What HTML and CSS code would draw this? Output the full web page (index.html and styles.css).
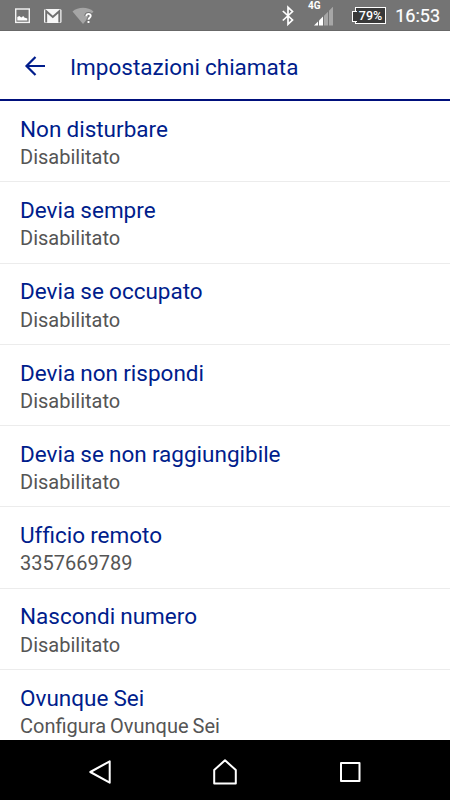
FILE: index.html
```html
<!DOCTYPE html>
<html lang="it">
<head>
<meta charset="utf-8">
<title>Impostazioni chiamata</title>
<link rel="stylesheet" href="styles.css">
</head>
<body>
<div class="screen">
  <div class="status">
    <svg class="status-icons" width="110" height="31" viewBox="0 0 110 31">
      <rect x="15.7" y="9" width="13.6" height="13.4" fill="none" stroke="#f4f4f4" stroke-width="1.4"/>
      <path d="M17.3 20.5v-3.5l2-1 2 1.500 2-1.500 1 1.500 3 1v2z" fill="#fff"/>
      <rect x="44" y="9" width="17.500" height="14" rx="1.500" fill="#f7f7f7"/>
      <path d="M46.200 22.500V11.200L52.800 17l6.500-5.800v11.300" fill="none" stroke="#707070" stroke-width="1.900"/>
      <path d="M72.500 11.500C78 6.500 88 6.500 93.500 11.500L83 24z" fill="#a5a5a5"/>
      <path d="M86.300 16.200c.2-3.200 4.600-2.900 4.400-.2-.2 1.800-2.200 1.600-2.200 4M88.500 21v2" fill="none" stroke="#747474" stroke-width="4"/>
      <path d="M86.300 16.200c.2-3.200 4.600-2.900 4.400-.2-.2 1.800-2.200 1.600-2.200 3.700M88.500 21v1.900" fill="none" stroke="#fff" stroke-width="1.900"/>
    </svg>
    <div class="status-right">
      <svg width="14" height="31" viewBox="281 0 14 31">
        <path d="M282.800 11L292.500 20 288 24.200V7.300L292.500 11.500 282.800 20.500" fill="none" stroke="#fff" stroke-width="1.700"/>
      </svg>
      <div class="signal">
        <span class="network">4G</span>
        <svg width="20" height="19" viewBox="314 7 20 19">
          <path d="M314 25.500l4-4v4z" fill="#fff"/>
          <path d="M319 20.500l4-4v9h-4z" fill="#fff"/>
          <path d="M324 15.700l4-4v13.800h-4zM329 10.700l4-4v18.800h-4z" fill="#a6a6a6"/>
        </svg>
      </div>
      <div class="battery">79%</div>
      <div class="clock">16:53</div>
    </div>
  </div>
  <header class="header">
    <svg width="22" height="22" viewBox="0 0 22 22">
      <path d="M21 11H2.500M11.500 2L2.500 11l9 9" fill="none" stroke="#001d8c" stroke-width="2.200"/>
    </svg>
    <h1>Impostazioni chiamata</h1>
  </header>
  <main class="list">
    <section class="row"><h2>Non disturbare</h2><p>Disabilitato</p></section>
    <section class="row"><h2>Devia sempre</h2><p>Disabilitato</p></section>
    <section class="row"><h2>Devia se occupato</h2><p>Disabilitato</p></section>
    <section class="row"><h2>Devia non rispondi</h2><p>Disabilitato</p></section>
    <section class="row"><h2>Devia se non raggiungibile</h2><p>Disabilitato</p></section>
    <section class="row"><h2>Uf&zwnj;ficio remoto</h2><p>3357669789</p></section>
    <section class="row"><h2>Nascondi numero</h2><p>Disabilitato</p></section>
    <section class="row"><h2>Ovunque Sei</h2><p>Configura Ovunque Sei</p></section>
  </main>
  <nav class="navbar">
    <svg width="26" height="28" viewBox="0 0 26 28"><path d="M22.700 3.300v21.400L3.300 14z" fill="none" stroke="#fff" stroke-width="2" stroke-linejoin="round"/></svg>
    <svg width="26" height="28" viewBox="0 0 26 28"><path d="M2.200 12L13 2.300 23.800 12v13.500H2.200z" fill="none" stroke="#fff" stroke-width="2" stroke-linejoin="round"/></svg>
    <svg width="26" height="28" viewBox="0 0 26 28"><rect x="4" y="5" width="18.500" height="18" fill="none" stroke="#fff" stroke-width="2" stroke-linejoin="round"/></svg>
  </nav>
</div>
</body>
</html>
```
FILE: styles.css
```css
* { box-sizing: border-box; }
body, h1, h2, p { margin: 0; font-weight: 400; }
body { font-family: Roboto, sans-serif; background: #fff; }
svg { display: block; flex: none; }
.screen { width: 450px; height: 800px; display: flex; flex-direction: column; overflow: hidden; }
.status {
  height: 31px; flex: none; display: flex; justify-content: space-between;
  background: #747474; border-bottom: 1px solid #686868; color: #fff;
}
.status-right { display: flex; align-items: center; padding-right: 10px; }
.signal { display: flex; align-items: flex-end; height: 31px; margin-left: 13px; padding-bottom: 5px; }
.network { align-self: flex-start; width: 6px; font-size: 10px; line-height: 11px; font-weight: 700; white-space: nowrap; }
.battery {
  position: relative; width: 31px; height: 17px; margin-left: 21px;
  border: 1px solid #fff; background: #393939; font-size: 12.500px; font-weight: 500;
  line-height: 16px; text-align: center;
}
.battery::before {
  content: ""; position: absolute; left: -4px; top: 3px; width: 4px; height: 9px;
  border: 1px solid #fff; border-right: 0; background: #393939;
}
.clock { width: 54px; font-size: 18px; line-height: 33px; padding-top: 1px; text-align: right; white-space: nowrap; -webkit-text-stroke: 0.2px #fff; }
.header {
  height: 70px; flex: none; display: flex; align-items: center; gap: 24px;
  padding: 2px 0 0 24px; border-bottom: 2px solid #00107c; color: #001d8c;
}
.header h1 { font-size: 22.500px; line-height: 28px; padding-top: 2px; word-spacing: -0.500px; }
.list { flex: 1; min-height: 0; overflow: hidden; }
.row { height: 81.250px; padding: 13.900px 20px 0; border-bottom: 1px solid #ececec; }
.row h2 { font-size: 22.500px; line-height: 28px; color: #001d8c; word-spacing: -0.400px; }
.row p { font-size: 20px; line-height: 28px; padding-top: 0.300px; color: #555; word-spacing: -1px; }
.navbar {
  height: 60px; flex: none; display: flex; align-items: center; justify-content: space-between;
  padding: 4px 87px 0; background: #000;
}
```
